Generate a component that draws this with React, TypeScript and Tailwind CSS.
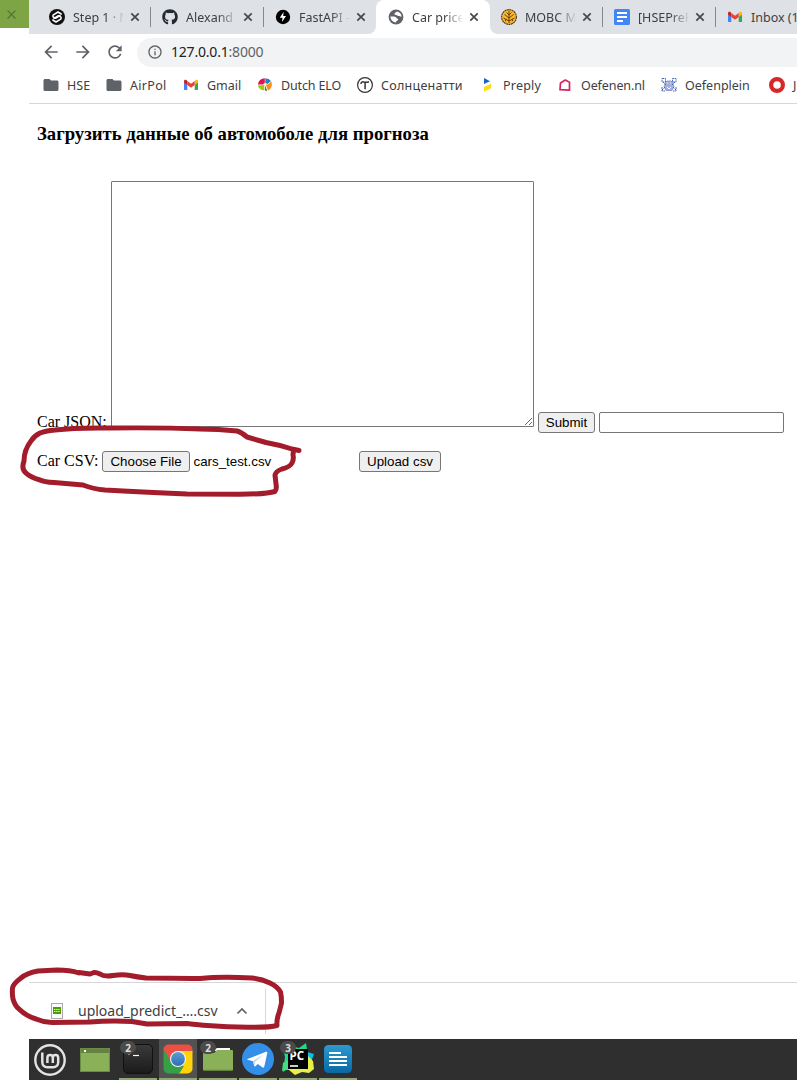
import type { ReactNode } from 'react';
import { FaGithub } from 'react-icons/fa';
import { MdArrowBack, MdArrowForward, MdClose, MdFolder, MdInfoOutline, MdRefresh } from 'react-icons/md';

const StepikIcon = () => (
  <svg viewBox="0 0 16 16" className="size-4">
    <circle cx="8" cy="8" r="8" fill="#111" />
    <g fill="none" stroke="#fff" strokeWidth="1.5" strokeLinecap="round" strokeLinejoin="round">
      <path d="M12.2 5 9 3 4 6.2v1.6l2.6 1.5L11 6.6" />
      <path d="M3.8 11 7 13l5-3.2V8.200L9.400 6.700 5 9.400" />
    </g>
  </svg>
);

const BoltIcon = () => (
  <svg viewBox="0 0 16 16" className="size-4">
    <circle cx="8" cy="8" r="7.2" fill="#000" />
    <path d="M8.6 3 4.8 8.8h2.7L7 13l4-5.9H8.2z" fill="#fff" />
  </svg>
);

const GlobeIcon = () => (
  <svg viewBox="0 0 16 16" className="size-4">
    <circle cx="8" cy="8" r="7.4" fill="#5f6368" />
    <path d="M9.200 2.500C7.500 3 7.500 4 6.500 4.600c-.6.600.5 1.300 1.600 1.500 1.300.2 1.300.900 2.500.8 1-.1 1.600.900 3 .7-.2-2.600-1.900-4.500-4.400-5.100z" fill="#fff" />
    <path d="M2.400 7.600h3.500c1.900 0 2.100 1.400 3.200 1.800 1.500.5 1.400 1.700.2 2.100-1 .4-1 1.100-1.300 2-3-.1-5.600-2.600-5.600-5.900z" fill="#fff" />
  </svg>
);

const TreeIcon = () => (
  <svg viewBox="0 0 16 16" className="size-4">
    <circle cx="8" cy="8" r="7.400" fill="#fdb52e" stroke="#4a3813" strokeWidth="1.100" strokeDasharray="2 .5" />
    <path d="M8 2v12M8 6 5.500 3.500M8 6l2.500-2.500M8 9 3.500 5.500M8 9l4.500-3.500M8 12 2.500 9M8 12l5.500-3M4.600 10.200v2M11.400 10.200v2" fill="none" stroke="#4a3813" strokeWidth=".9" />
  </svg>
);

const DocsIcon = () => (
  <svg viewBox="0 0 16 16" className="size-4">
    <rect width="16" height="16" rx="1.6" fill="#4285f4" />
    <path d="M3 4h10M3 8h10M3 12h6" stroke="#fff" strokeWidth="1.8" />
  </svg>
);

const GmailIcon = () => (
  <svg viewBox="0 0 16 16" className="size-4">
    <path d="M1 5v7.2c0 .5.4.9.9.9h2.400V7z" fill="#4285f4" />
    <path d="M15 5v7.200c0 .5-.4.9-.9.9h-2.400V7z" fill="#34a853" />
    <path d="M11.700 4v4L15 5.600V4.200c0-1.500-1.400-1.800-2.200-1.200z" fill="#fbbc04" />
    <path d="M1 5.600 4.300 8V4l-1-.9C2.200 2.400 1 3 1 4.200z" fill="#c5221f" />
    <path d="M4.300 8V4L8 6.800 11.700 4v4L8 10.800z" fill="#ea4335" />
  </svg>
);

const DutchIcon = () => (
  <svg viewBox="0 0 16 16" className="size-4">
    <path d="M1 7.500A7 6.500 0 0 1 7.800 1.200V6L5.500 7.500z" fill="#e0134f" />
    <path d="M8.300 1.200A7 6.500 0 0 1 14 4l-3.500 3L8.300 6z" fill="#1687cf" />
    <path d="M1 8.300h4.300L7.300 7v6.500C4.300 13.500 1.400 11.500 1 8.300z" fill="#99ca16" />
    <path d="M14.300 4.500c1.500 3.800 0 7.500-3.300 9.100L8.700 7.200l2 .5z" fill="#fb8f16" />
    <path d="m8 8.300 2.200 5.500H8z" fill="#7c5b43" />
  </svg>
);

const TildaIcon = () => (
  <svg viewBox="0 0 16 16" className="size-4" fill="none" stroke="#333">
    <circle cx="8" cy="8" r="7.4" strokeWidth="1.2" />
    <path d="M4 6.900c0-1.700 1.300-2.400 2.700-1.900 1.600.5 2.700.8 5.300-.2M8.100 5.700v6.500" strokeWidth="1.500" />
  </svg>
);

const PreplyIcon = () => (
  <svg viewBox="0 0 16 16" className="size-4">
    <path d="M5 1v6l6-2.800z" fill="#1565c9" />
    <path d="M5 10 12 6.800v4.500L5 14.800z" fill="#ffdc17" />
  </svg>
);

const HouseIcon = () => (
  <svg viewBox="0 0 16 16" className="size-4">
    <path d="M3.500 6 8.300 3 12.500 5.200v8l-9.500-.5z" fill="none" stroke="#d6245d" strokeWidth="1.700" strokeLinejoin="round" />
  </svg>
);

const CreatureIcon = () => (
  <svg viewBox="0 0 16 16" className="size-4">
    <path d="M4.500 5.500 6 4h4l1.500 1.500 1.500 4-2 4H5l-2-4z" fill="#a4aedf" stroke="#7c8bcb" strokeWidth=".8" />
    <path d="M1 1.500h3.500V5H1zM11.500 1.500H15V5h-3.500zM2 5l3 3m9-3-3 3M1 13l3-3m11 3-3-3M1 10v4h3m11-4v4h-3" fill="none" stroke="#4668b5" strokeWidth="1" strokeDasharray="2 .7" />
    <path d="M6 6h1m2 0h1M6 10l2 2 2-2" stroke="#fff" strokeWidth=".9" fill="none" />
  </svg>
);

const RingIcon = () => (
  <svg viewBox="0 0 16 16" className="size-4">
    <circle cx="8" cy="8" r="5.900" fill="none" stroke="#d62828" strokeWidth="4.200" />
  </svg>
);

type TabInfo = { title: string; icon: ReactNode; active?: boolean; line?: boolean; last?: boolean };

const tabs: TabInfo[] = [
  { title: 'Step 1 · M', icon: <StepikIcon />, line: true },
  { title: 'Alexand', icon: <FaGithub className="size-4 text-[#24292f]" />, line: true },
  { title: 'FastAPI -', icon: <BoltIcon /> },
  { title: 'Car price', icon: <GlobeIcon />, active: true },
  { title: 'MOBC M', icon: <TreeIcon />, line: true },
  { title: '[HSEPreP', icon: <DocsIcon />, line: true },
  { title: 'Inbox (1)', icon: <GmailIcon />, last: true },
];

function Tab({ title, icon, active, line, last }: TabInfo) {
  return (
    <div className={`relative flex h-[34px] w-[113px] shrink-0 items-center pl-3 ${active ? 'z-10 rounded-t-lg bg-white shadow-[1px_0_0_#fff]' : ''}`}>
      {active && (
        <>
          <svg viewBox="0 0 8 8" className="absolute bottom-0 -left-2 size-2"><path d="M0 8h8V0a8 8 0 0 1-8 8" fill="#fff" /></svg>
          <svg viewBox="0 0 8 8" className="absolute -right-[9px] bottom-0 size-2"><path d="M8 8H0V0a8 8 0 0 0 8 8" fill="#fff" /></svg>
        </>
      )}
      {icon}
      <span className={`mt-px ml-2 w-[50px] shrink-0 overflow-hidden whitespace-nowrap text-[12.5px] leading-5 text-[#3c4043] ${last ? '' : '[mask-image:linear-gradient(to_right,black_64%,transparent_104%)]'}`}>
        {title}
      </span>
      {!last && (
        <svg viewBox="0 0 14 14" className="ml-[5px] size-[14px] shrink-0">
          <path d="m3.300 3.300 7.400 7.400m0-7.400-7.400 7.400" stroke="#45494d" strokeWidth="1.700" />
        </svg>
      )}
      {line && <span className="absolute top-[7px] right-[-1px] h-5 w-px bg-[#85888c]" />}
    </div>
  );
}

const folder = <MdFolder className="-ml-px size-[18px] shrink-0 text-[#5f6368]" />;

const bookmarks: { label: string; icon: ReactNode; width: string; text?: string }[] = [
  { label: 'HSE', icon: folder, width: 'w-[63px]' },
  { label: 'AirPol', icon: folder, width: 'w-[77px]', text: 'tracking-[0.3px]' },
  { label: 'Gmail', icon: <GmailIcon />, width: 'w-[74px]' },
  { label: 'Dutch ELO', icon: <DutchIcon />, width: 'w-[100px]', text: 'tracking-[-0.15px]' },
  { label: 'Солнценатти', icon: <TildaIcon />, width: 'w-[122px]', text: 'tracking-[0.27px]' },
  { label: 'Preply', icon: <PreplyIcon />, width: 'w-[78px]', text: 'tracking-[0.2px]' },
  { label: 'Oefenen.nl', icon: <HouseIcon />, width: 'w-[104px]', text: 'tracking-[-0.1px]' },
  { label: 'Oefenplein', icon: <CreatureIcon />, width: 'w-[108px]' },
  { label: 'J', icon: <RingIcon />, width: 'w-[28px]' },
];

function FormButton({ children, className }: { children: ReactNode; className: string }) {
  return (
    <button className={`h-[21px] shrink-0 whitespace-nowrap rounded-[3px] border border-[#767676] bg-[#efefef] text-center font-['Liberation_Sans',sans-serif] text-[13.333px] leading-[19px] text-black ${className}`}>
      {children}
    </button>
  );
}

const MintIcon = () => (
  <svg viewBox="0 0 32 32" className="size-8" fill="none" stroke="#e3e3e3">
    <circle cx="16" cy="16" r="14.7" strokeWidth="2.4" />
    <path d="M8.300 8.500v9.800a5 5 0 0 0 5 5h5.900a5 5 0 0 0 5-5v-4.500a2.700 2.700 0 0 0-5.400 0V19m0-5.200a2.700 2.700 0 0 0-5.400 0V19" strokeWidth="2.500" />
  </svg>
);

const DesktopIcon = () => (
  <svg viewBox="0 0 30 24" className="h-6 w-[30px]">
    <rect width="30" height="24" fill="#8bb158" />
    <rect width="30" height="5" fill="#648242" />
    <rect x=".5" y=".5" width="29" height="23" fill="none" stroke="#6b8c44" />
    <rect x="4" y="2" width="2" height="2" fill="#fff" />
  </svg>
);

const TerminalIcon = () => (
  <svg viewBox="0 0 30 30" className="size-[30px]">
    <defs><linearGradient id="term" x2="0" y2="1"><stop stopColor="#3a3a3a" /><stop offset="1" stopColor="#1b1b1b" /></linearGradient></defs>
    <rect x=".5" y=".5" width="29" height="29" rx="4.5" fill="url(#term)" stroke="#111" />
    <path d="M10 11.500h6" stroke="#fff" strokeWidth="1.200" />
    <path d="m5.500 8 2 1.300-2 1.300" stroke="#ddd" fill="none" />
  </svg>
);

const ChromeIcon = () => (
  <svg viewBox="0 0 30 30" className="size-[30px]">
    <defs>
      <clipPath id="chromeClip"><rect x=".5" y=".5" width="29" height="29" rx="5" /></clipPath>
      <linearGradient id="chromeBlue" x2="0" y2="1"><stop stopColor="#5c9bd5" /><stop offset="1" stopColor="#2d70b3" /></linearGradient>
    </defs>
    <g clipPath="url(#chromeClip)">
      <path d="M0 0h30v8H15l-7 10L0 5z" fill="#ec5045" />
      <path d="M15 7h15v23H15l7-12z" fill="#ffd20a" />
      <path d="M0 4l8 14 7 5 6-1-5 8H0z" fill="#37a047" />
    </g>
    <circle cx="15" cy="15" r="8" fill="#f5f5f5" />
    <circle cx="15" cy="15" r="6.9" fill="url(#chromeBlue)" />
  </svg>
);

const FilesIcon = () => (
  <svg viewBox="0 0 30 24" className="h-6 w-[30px]">
    <path d="M0 1h11v4H0z" fill="#6b8c44" />
    <path d="M11 3 14 1h13v3H11z" fill="#fff" />
    <path d="M0 6h11l3-3h15a1 1 0 0 1 1 1v18.500a1 1 0 0 1-1 1H1a1 1 0 0 1-1-1z" fill="#8bb158" />
    <path d="M.5 23.200h29" stroke="#67883f" />
  </svg>
);

const TelegramIcon = () => (
  <svg viewBox="0 0 32 32" className="size-8">
    <circle cx="16" cy="16" r="16" fill="#348fe8" />
    <path d="M5.500 16 24 8.800c1-.3 1.500.2 1.300 1.200l-3 13.500c-.3 1.200-1 1.400-2 .8l-4.500-3.400-2.400 2.400c-.5.5-1.200.2-1.300-.5l-1-4.600-5.400-1.500c-.8-.3-.8-.4-.2-.7z" fill="#fff" />
    <path d="m11 18 10-6.300-8.100 7.400-.5 3.800z" fill="#b8d7f4" />
  </svg>
);

const PyCharmIcon = () => (
  <svg viewBox="0 0 32 32" className="size-8">
    <path d="m1 6 12-2 4 1 7-5 1 6-5 10L1 29l2-15z" fill="#21d789" />
    <path d="m25 9 7 2-3 8h-7z" fill="#07c3f2" />
    <path d="m1 20 25-7 5 5 1 8-5 4-7-1-7 3-6-5-6-1z" fill="#e7f047" />
    <path d="m1 20 8-5 3 10-12 3z" fill="#42dc83" />
    <rect x="6" y="6" width="20" height="20" fill="#000" />
    <text x="7.500" y="16.500" fill="#fff" fontSize="11.500" fontWeight="700" fontFamily="Noto Sans, sans-serif">PC</text>
    <path d="M8 23h8" stroke="#fff" strokeWidth="1.600" />
  </svg>
);

const WriterIcon = () => (
  <svg viewBox="0 0 28 28" className="size-7">
    <defs><linearGradient id="writer" x2="0" y2="1"><stop stopColor="#2d99cf" /><stop offset="1" stopColor="#0869a5" /></linearGradient></defs>
    <rect width="28" height="28" rx="4.500" fill="url(#writer)" />
    <path d="M5 8h12M5 12h18M5 16h18M5 20h18" stroke="#fff" strokeWidth="1.800" />
  </svg>
);

const taskItems: { icon: ReactNode; count?: string; active?: boolean }[] = [
  { icon: <TerminalIcon />, count: '2' },
  { icon: <ChromeIcon />, active: true },
  { icon: <FilesIcon />, count: '2' },
  { icon: <TelegramIcon /> },
  { icon: <PyCharmIcon />, count: '3' },
  { icon: <WriterIcon /> },
];

const Annotations = () => (
  <svg viewBox="0 0 797 1080" className="pointer-events-none absolute inset-0 h-[1080px] w-[797px]" fill="none" stroke="#a31c2c" strokeWidth="5" strokeLinecap="round" strokeLinejoin="round">
    <path d="M299 450.500 292 449Q280 445 266 442.500L247 437Q241 432 237 431Q218 429 200 429Q165 427.500 110 428Q75 427.500 55 430Q45 431 40 433Q34 436 31 441Q24 450 24 461Q21 469 26 473Q30 477 40 480Q44 482 54 482.500L83 485Q93 489 105 490Q140 492 187 494L240 494.300Q267 494 275 491.500Q277 489 276 484L275 475Q276 471 282 469Q290 467 292 463Q294 459 293 455L293.500 450" />
    <path d="M79 973Q70 970 57 970L38 971Q27 973 21 978Q13 984 12.500 988Q12 994 13 999Q15 1006 19 1009Q26 1016 36 1019Q44 1022.500 52 1022.500L90 1022Q110 1020.500 132 1021.500L147 1024L187 1023.500Q200 1025 207 1025.500Q230 1027.500 252 1027.300Q270 1027.500 277 1025.500Q276.500 1019 279 1013L281.500 1003Q281.500 996 280.500 992Q278 987 270 983Q262 979 252 978Q220 976.500 200 978.500Q165 978 146 978Q137 977 130 975.500Q123 974 113 975.500Q104 977 100 974Q96 972 94 972.500L90 974L79 972.500" />
  </svg>
);

export default function App() {
  return (
    <div className="relative flex h-[1080px] w-[797px] overflow-hidden bg-white font-['Noto_Sans',sans-serif]">
      <aside className="w-[29px] shrink-0">
        <div className="flex h-7 items-center bg-[#7da545] pl-1">
          <MdClose className="size-[15px] text-[#567437]" />
        </div>
      </aside>

      <main className="flex w-[768px] shrink-0 flex-col">
        <nav className="flex h-[34px] shrink-0 overflow-hidden bg-[#dee1e6] pl-2">
          {tabs.map((tab) => <Tab key={tab.title} {...tab} />)}
        </nav>

        <div className="flex h-[37px] shrink-0 items-center pb-px text-[#5f6368]">
          <MdArrowBack className="ml-3 size-5" />
          <MdArrowForward className="ml-3 size-5" />
          <MdRefresh className="ml-3 size-5" />
          <div className="mt-px ml-3 flex h-[29px] flex-1 items-center rounded-l-full bg-[#f1f3f4] pl-[10px]">
            <MdInfoOutline className="mb-px size-4" />
            <span className="mb-px ml-2 text-[14px] leading-5 tracking-[-0.2px] text-[#5f6368]"><span className="text-[#202124]">127.0.0.1</span>:8000</span>
          </div>
        </div>

        <div className="flex h-[33px] shrink-0 overflow-hidden border-b border-[#d5d7da] pb-1 pl-[14px]">
          {bookmarks.map((b) => (
            <div key={b.label} className={`flex shrink-0 items-center ${b.width}`}>
              <span className="flex w-4 shrink-0">{b.icon}</span>
              <span className={`mt-[2px] ml-2 whitespace-nowrap text-[12.5px] leading-4 text-[#3c4043] ${b.text ?? ''}`}>{b.label}</span>
            </div>
          ))}
        </div>

        <section className="flex h-[878px] shrink-0 flex-col pl-2 font-['Liberation_Serif',serif] text-black">
          <h3 className="mt-[19px] h-[22px] text-[18.72px] leading-[22px] font-bold">Загрузить данные об автомоболе для прогноза</h3>
          <form className="mt-9 flex h-[252px] items-start" onSubmit={(e) => e.preventDefault()}>
            <label className="mt-[232px] w-[74px] shrink-0 text-[16px] leading-[18px]">Car JSON:</label>
            <textarea className="h-[246px] w-[423px] shrink-0 resize rounded-[1px] border border-[#767676] bg-white outline-none" />
            <FormButton className="mt-[231px] ml-1 w-[57px]">Submit</FormButton>
            <input className="mt-[231px] ml-1 h-[21px] w-[185px] shrink-0 rounded-[2px] border border-[#767676] outline-none" />
          </form>
          <div className="mt-[18px] flex h-[21px] items-center">
            <label className="mb-[2px] w-[65px] shrink-0 text-[16px] leading-[18px]">Car CSV:</label>
            <FormButton className="w-[88px]">Choose File</FormButton>
            <span className="ml-[3.5px] w-[165.5px] font-['Liberation_Sans',sans-serif] text-[13.333px]">cars_test.csv</span>
            <FormButton className="w-[82px]">Upload csv</FormButton>
          </div>
        </section>

        <div className="flex h-[57px] shrink-0 items-center border-t border-[#d5d7da]">
          <div className="flex h-[45px] w-[237px] items-center border-r border-[#d5d7da] pl-[22px]">
            <svg viewBox="0 0 12 16" className="h-4 w-3">
              <rect x=".5" y=".5" width="11" height="15" fill="#fafafa" stroke="#aaa" />
              <rect x="2" y="4" width="8" height="7" fill="#4e9a06" />
              <path d="M3 6.500h6M3 8.500h6" stroke="#d9efc4" strokeWidth="1" strokeDasharray="1.500 .6" />
            </svg>
            <span className="mb-[2px] ml-[15px] w-[140px] whitespace-nowrap text-[14px] text-[#3c4043]">upload_predict_….csv</span>
            <svg viewBox="0 0 12 8" className="ml-[18px] h-2 w-3"><path d="m1.500 6.500 4.500-4.500 4.500 4.500" fill="none" stroke="#5f6368" strokeWidth="1.700" /></svg>
          </div>
        </div>

        <footer className="flex h-[41px] shrink-0 bg-[#2f2f2f]">
          <div className="ml-[5px] flex w-8 items-center"><MintIcon /></div>
          <div className="ml-[14px] flex w-[30px] items-center"><DesktopIcon /></div>
          <div className="ml-[9px] flex gap-[2px]">
            {taskItems.map((item, i) => (
              <div key={i} className={`relative flex h-[41px] w-[38px] items-center justify-center border-b-2 border-[#8fa876] ${item.active ? 'bg-[#525252]' : ''}`}>
                {item.icon}
                {item.count && (
                  <span className="absolute top-[2px] left-[1px] flex h-[13px] w-4 items-center justify-center rounded-full bg-[#4b4b4b] text-[10px] leading-none font-bold text-[#ddd]">{item.count}</span>
                )}
              </div>
            ))}
          </div>
        </footer>
      </main>
      <Annotations />
    </div>
  );
}
